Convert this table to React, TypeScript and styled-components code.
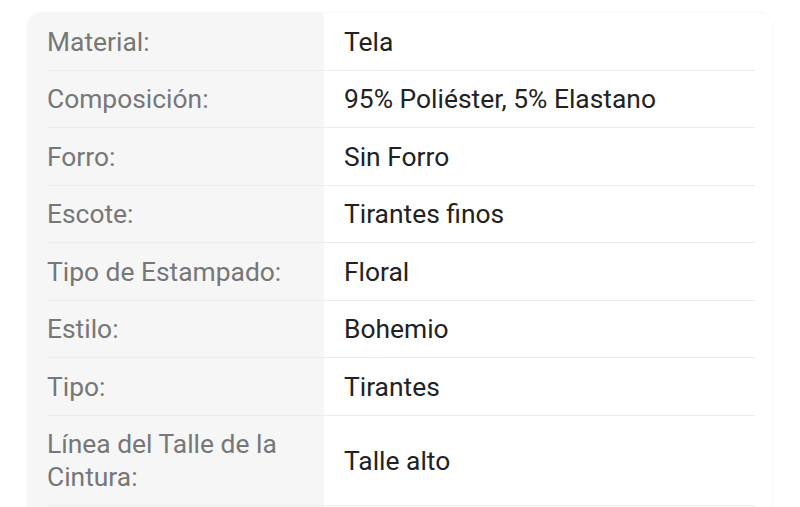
import React from "react";
import styled, { createGlobalStyle } from "styled-components";

const GlobalStyle = createGlobalStyle`
  html, body {
    margin: 0;
    padding: 0;
    background: #ffffff;
    font-family: Roboto, "Noto Sans", Arial, sans-serif;
  }
`;

const Page = styled.div`
  padding: 13px 28px 0 28px;
`;

const Card = styled.div`
  width: 744px;
  border-radius: 12px;
  overflow: hidden;
  box-shadow: 0 0 3px rgba(0, 0, 0, 0.07);
  display: grid;
  grid-template-columns: 296px 1fr;
  padding-bottom: 16px;
  background: linear-gradient(to right, #f6f6f6 296px, #ffffff 296px);
`;

const Row = styled.div`
  display: contents;
`;

const Cell = styled.div<{ $label?: boolean; $tall?: boolean }>`
  height: ${({ $tall }) => ($tall ? "90px" : "57.5px")};
  box-sizing: border-box;
  display: flex;
  padding: ${({ $label }) => ($label ? "0 0 0 19px" : "0 17px 0 0")};
  font-size: 26.4px;
  line-height: 33px;
  color: ${({ $label }) => ($label ? "#777777" : "#222222")};
`;

const Text = styled.span<{ $label?: boolean }>`
  flex: 1;
  display: flex;
  align-items: center;
  padding-top: 2px;
  padding-left: ${({ $label }) => ($label ? "0" : "20px")};
  padding-right: ${({ $label }) => ($label ? "20px" : "0")};
  border-bottom: 1.5px solid #ececec;
`;

const rows: [string, string][] = [
  ["Material:", "Tela"],
  ["Composición:", "95% Poliéster, 5% Elastano"],
  ["Forro:", "Sin Forro"],
  ["Escote:", "Tirantes finos"],
  ["Tipo de Estampado:", "Floral"],
  ["Estilo:", "Bohemio"],
  ["Tipo:", "Tirantes"],
  ["Línea del Talle de la Cintura:", "Talle alto"],
];

export default function App() {
  return (
    <>
      <GlobalStyle />
      <Page>
        <Card>
          {rows.map(([label, value], i) => {
            const tall = i === rows.length - 1;
            return (
              <Row key={label}>
                <Cell $label $tall={tall}>
                  <Text $label>{label}</Text>
                </Cell>
                <Cell $tall={tall}>
                  <Text>{value}</Text>
                </Cell>
              </Row>
            );
          })}
        </Card>
      </Page>
    </>
  );
}
